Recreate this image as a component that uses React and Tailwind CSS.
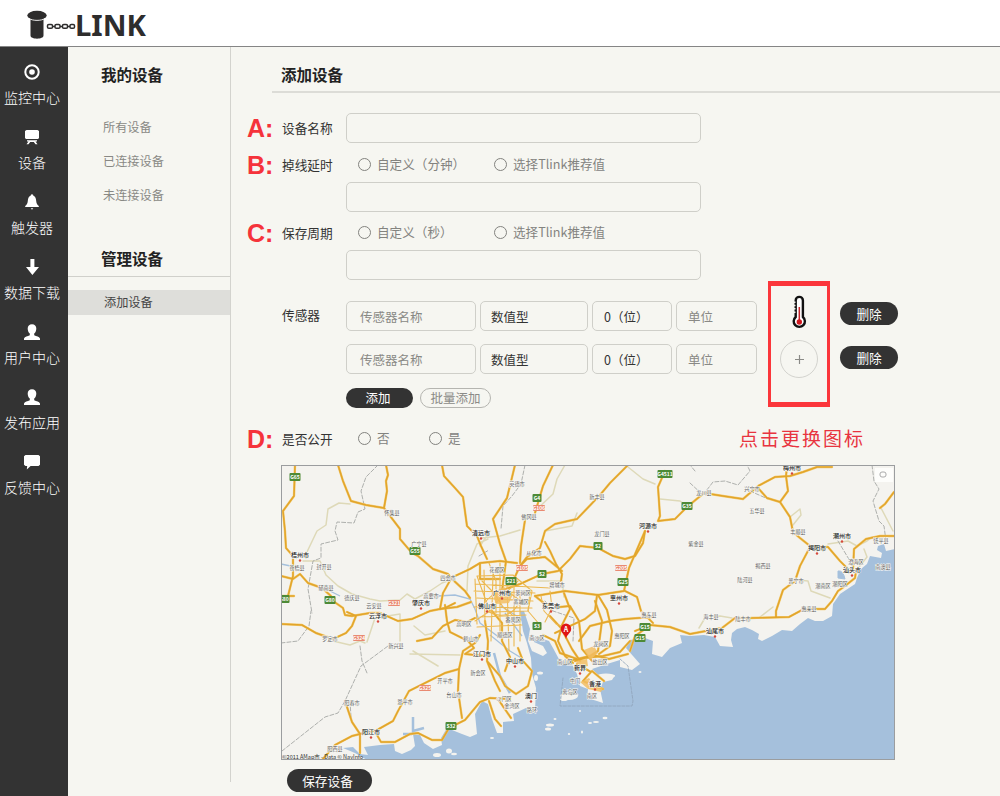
import React from "react";

const field = "rounded-[5px] border border-[#cfcfc9] bg-[#f6f6f1]";

function Glyph({ name }) {
  const shapes = {
    target: (
      <>
        <circle cx="8" cy="8" r="6.7" fill="none" stroke="#fff" strokeWidth="2" />
        <circle cx="8" cy="8" r="2.8" />
      </>
    ),
    device: <path d="M2.500 1h11l1.500 1v7l-1 1H2L1 9V2zM3 11.300h10v1.200h-1.500l2 2.800h-2l-1.700-2.300H6.200l-1.700 2.300h-2l2-2.800H3z" />,
    bell: <path d="M8 .3c1 0 1.300.8 1.400 1.500C11.500 2.600 12 4.500 12.200 7c.2 2.300.8 3.700 2.600 5V13H1.200v-1C3 10.700 3.600 9.300 3.800 7 4 4.500 4.500 2.600 6.600 1.800 6.700 1.100 7 .3 8 .3zM6.700 14.200h2.600L8 15.800z" />,
    down: <path d="M6.400 0h4v8H15L8.400 16 2 8h4.400z" />,
    user: <path d="M8 .2c2.700 0 4.300 1.700 4.300 4.200 0 2-.8 4-2.100 5.200v1.600c2.300 1 5 1.500 5.800 3.200V16H0v-1.600c.8-1.700 3.500-2.200 5.800-3.200V9.600C4.500 8.400 3.700 6.400 3.700 4.400 3.700 1.900 5.300.2 8 .2z" />,
    chat: <path d="M1.500 1h13L16 2.200v8.600L14.500 12H6.600l-3.800 3.500L3.200 12H1.500L0 10.800V2.200z" />,
  };
  return (
    <svg viewBox="0 0 16 16" className="h-4 w-4 fill-white">
      {shapes[name]}
    </svg>
  );
}

const nav = [
  ["target", "监控中心"],
  ["device", "设备"],
  ["bell", "触发器"],
  ["down", "数据下载"],
  ["user", "用户中心"],
  ["user", "发布应用"],
  ["chat", "反馈中心"],
];

function Logo() {
  return (
    <svg viewBox="0 0 130 40" className="ml-6 mt-1 h-10 w-[130px]" fill="#2e2d2d">
      <path d="M6.500 14v17.500c0 4.200 13 4.200 13 0V14z" />
      <ellipse cx="13" cy="11.500" rx="9.700" ry="4.700" />
      <path d="M5 14.500c4 2.500 12 2.500 16 0" fill="none" stroke="#fff" strokeWidth=".9" />
      <g fill="none" stroke="#2e2d2d" strokeWidth="1.500">
        <rect x="23.500" y="20.500" width="5" height="3.800" rx="1.300" />
        <rect x="31" y="20.500" width="5" height="3.800" rx="1.300" />
        <rect x="38.500" y="20.500" width="5" height="3.800" rx="1.300" />
        <rect x="46" y="20.500" width="4.500" height="3.800" rx="1.300" />
        <path d="M28 22.400h3M36 22.400h3M43 22.400h3" />
      </g>
      <text x="51" y="32.300" fontSize="29" fontWeight="700" fontFamily="'Noto Sans', sans-serif" textLength="71" lengthAdjust="spacingAndGlyphs">LINK</text>
    </svg>
  );
}

/* Map geometry is in canvas coordinates; the origin of the view is 281,464. */
const coast =
  "M895 548L886 550 884 543 878 545 877 549 882 552 881 557 870 555 867 563 861 568 857 577 855 583 840 593 833 603 832 615 823 620 815 620 808 617 800 623 792 630 782 629 772 635 762 640 758 638 759 633 752 629 745 626 737 628 732 632 731 639 733 646 720 645 715 636 704 634 690 635 680 634 682 642 670 647 662 656 652 653 653 640 645 637 630 639 626 647 640 663 632 669 620 666 620 659 607 663 592 668 598 674 615 674 612 679 603 681 600 688 603 702 597 700 587 697 588 688 580 685 577 673 572 663 560 660 553 647 549 640 543 638 533 636 534 641 543 645 547 652 543 655 532 650 528 640 530 628 524 610 520 610 523 630 527 642 531 657 532 673 536 687 535 710 526 707 513 713 514 720 503 721 503 732 497 732 492 718 488 703 482 700 475 713 477 733 470 736 462 733 447 727 441 737 442 744 433 748 424 742 420 734 413 733 415 745 411 749 402 753 395 750 394 743 380 744 364 746 368 754 360 753 353 746 343 747 355 752 367 759 895 759Z";

const majorRoads = [
  "M295 464L294 495 283 510 285 530 286 547 293 555 293 575 288 595 283 597M281 575L293 578 300 573 308 582 322 587 331 595 333 600 343 607 345 614 352 615 370 612 380 612 398 620 412 618 430 610 445 607 455 602",
  "M338 464L343 480 351 500 366 504 384 507 387 490 386 480 388 474 386 464M384 507L400 528 400 538 412 552 418 555 433 568 448 573 452 578 465 590 470 597",
  "M442 464L444 475 455 487 463 496 467 525 477 535 481 545 487 558",
  "M515 464L507 497 493 518 500 543 506 560 502 590M553 464L543 485 535 512",
  "M628 464L610 482 600 494 577 518 555 523 545 530 540 547 527 556 520 565 513 580",
  "M525 519L521 545 520 562M545 541L550 550 556 563 562 573 561 580M520 565L527 558 545 556 562 570M500 590L520 583 542 573 558 570 570 558 580 545 598 547 613 555 625 558 635 555 643 542 645 530",
  "M665 470L658 486 660 515 658 520 675 518 687 506 704 492 723 495 743 498 758 485 775 476 790 475 803 471 817 466 832 466M645 530L629 567 624 590 598 594 565 590 535 595",
  "M787 466L786 475 788 490 780 501 767 497 758 487M780 501L790 516 793 531 800 537 810 545 828 546 840 560 850 570",
  "M810 546L800 565 795 580 783 589 776 610 776 616M853 570L854 548 866 538 880 535 894 535M894 491L885 503 880 507M856 570L855 577 845 585 838 590 832 600 825 608 812 608 802 609 789 616 750 617 735 617 722 627 690 633 670 626 650 624 635 630",
  "M281 623L302 624 316 632 333 638 346 632 352 625 356 615 347 611M281 595L294 595",
  "M322 759L335 744 352 735 360 733 360 752M345 700L352 721 360 733 377 729 393 720 398 710 409 690 425 682 445 672 459 668 463 650 475 642 480 634M377 734L381 741 395 741 410 733 418 732 432 739 442 739 449 727 465 719 480 701 490 697 510 698",
  "M459 668L458 690 462 717M417 640L432 637 443 625 455 619 467 621 475 617M445 604L447 620 450 631 468 640 474 647 465 653 485 655",
  "M452 576L443 592 440 608 457 606 471 601M455 575L470 568 480 562 500 560 517 562M480 562L480 578 500 578",
  "M485 620L488 640 487 660 500 675 505 685 516 693 528 685 532 670 523 660 518 647M492 610L502 622 502 640 510 656 505 670M487 660L495 680 500 690",
  "M564 592L570 608 562 624 558 640 565 655 573 662M550 615L561 627 572 648 580 660M579 640L590 625 610 620 625 618 652 616M595 600L602 620 598 650 590 655 573 659M598 594L607 609 612 630 610 645 599 653M625 590L637 596 641 610 653 622",
  "M535 595L550 607 570 605 579 620 582 648 593 661M543 634L555 640 560 652 577 658M597 594L595 610 585 618 555 632M628 653L609 658 593 654M630 650L635 635 645 628",
  "M489 700L495 718 501 725M498 698L511 717M575 660L585 657 603 655 620 651 630 640M577 663L591 671 583 680 594 685 603 688M592 670L604 680",
];

const urbanRoads = [
  "M475 583L550 587M474 590L535 592M477 597L533 600M474 606L532 607M480 616L526 614M477 626L522 624M475 578L477 623M484 569L485 622M493 573L491 640M500 562L500 635M507 582L509 650M514 583L514 645M520 590L520 640M489 562L496 580 496 612M530 590L528 610 540 624M482 580L495 593 503 606 519 620M475 620L490 610 500 597 518 580M541 595L544 610 556 623 570 628M550 590L552 607 545 621",
  "M483 604Q500 580 520 600Q510 621 489 611Z",
  "M477 575L513 574L532 590L528 610L490 611Z",
];

const minorRoads = [
  "M306 553L317 530 326 524 328 508 339 502 350 503M303 560L320 560 326 574 338 585 352 593 370 598 380 600 400 599 407 593 415 598 430 590 442 582 453 578M467 590L468 565 477 543 488 538M481 537L500 535 520 529M480 545L490 530M367 641L375 617 400 613 400 640M413 650L438 665M410 653L460 654M333 640L350 644 360 640 365 642M414 625L425 634 445 630",
  "M565 464L557 478 553 493 535 510M545 530L572 525 577 512M628 466L643 478 655 483M660 498L680 500 687 505M790 516L800 508 801 514 793 524M790 578L808 580 811 590 830 597M828 543L848 540 857 545 867 540 872 536M864 548L867 556 855 571M699 627L705 617 720 615 732 617M760 616L773 606M881 507L893 530M537 580L562 580 564 596",
];

const borders = [
  "M378 464L366 476 361 490 365 508 358 511 354 522 337 521 335 530 338 539 321 543 321 557 313 560 308 588 312 612",
  "M281 642L298 640 309 625 311 610",
  "M282 750L325 716 338 712 345 700 361 665 388 645M360 645L362 660 367 672M350 700L351 716",
  "M525 464L521 483 512 495 503 505 501 528M690 482L703 494 713 481 725 480 738 484 750 470 747 464M750 490L768 498M872 464L874 480 879 488 873 500 879 520 884 525 886 540M695 470L690 464M892 475L883 469M838 540L850 560 853 570M545 600L553 610 574 617 573 640M479 555L489 549",
];

const shields = [
  [295, 476, "G65"], [415, 550, "G55"], [330, 599, "G80"], [284, 598, "G80"], [537, 497, "G4"],
  [542, 573, "S2"], [511, 580, "S21"], [598, 545, "S2"], [665, 473, "G4511"], [687, 505, "G35"],
  [623, 581, "G25"], [645, 626, "G15"], [640, 637, "G15"], [537, 625, "S3"], [451, 725, "S32"],
];
const routes = [
  [394, 602, "G321"], [359, 637, "G324"], [425, 687, "G325"], [539, 507, "G106"], [522, 567, "G105"], [621, 567, "G205"],
];

const cities = [
  [300, 555, "梧州市"], [481, 533, "清远市"], [421, 603, "肇庆市"], [502, 593, "广州市"], [487, 606, "佛山市"],
  [551, 606, "东莞市"], [648, 526, "河源市"], [619, 598, "惠州市"], [792, 468, "梅州市"], [842, 536, "潮州市"],
  [817, 548, "揭阳市"], [852, 570, "汕头市"], [715, 631, "汕尾市"], [378, 616, "云浮市"], [371, 732, "阳江市"],
  [482, 654, "江门市"], [515, 661, "中山市"], [531, 696, "澳门"], [580, 668, "新界"], [595, 684, "香港"],
];
const towns = [
  [297, 568, "苍梧县"], [324, 567, "封开县"], [326, 588, "郁南县"], [352, 598, "德庆县"], [374, 606, "云安县"],
  [392, 513, "怀集县"], [419, 544, "广宁县"], [448, 578, "四会市"], [431, 596, "高要市"], [517, 484, "英德市"],
  [529, 517, "佛冈县"], [597, 497, "新丰县"], [602, 534, "龙门县"], [534, 553, "从化市"], [497, 570, "花都区"],
  [557, 585, "增城市"], [523, 593, "萝岗区"], [521, 602, "黄埔区"], [704, 493, "龙川县"], [752, 489, "兴宁市"],
  [757, 511, "五华县"], [798, 532, "丰顺县"], [696, 544, "紫金县"], [763, 566, "揭西县"], [745, 580, "陆河县"],
  [796, 581, "普宁市"], [823, 586, "潮南区"], [840, 584, "潮阳区"], [856, 562, "澄海区"], [881, 541, "饶平县"],
  [883, 567, "南澳县"], [809, 609, "惠来县"], [711, 617, "海丰县"], [743, 619, "陆丰市"], [649, 615, "惠东县"],
  [622, 636, "惠阳区"], [330, 639, "罗定市"], [396, 646, "新兴县"], [352, 703, "阳春市"], [335, 749, "阳西县"],
  [405, 702, "恩平市"], [445, 681, "开平市"], [454, 695, "台山市"], [471, 639, "鹤山市"], [478, 673, "新会区"],
  [513, 620, "番禺区"], [505, 635, "顺德区"], [537, 638, "南沙区"], [601, 644, "龙岗区"], [565, 662, "南山区"],
  [600, 662, "盐田区"], [512, 706, "金湾区"], [532, 710, "路环"], [570, 692, "离岛区"], [592, 696, "南区"],
  [504, 699, "斗门区"], [464, 624, "高明区"], [575, 681, "屯门"],
];

const islands = [
  [540, 672, 3, 1.5], [536, 677, 2, 3], [569, 695, 9, 4], [564, 698, 4, 2], [550, 724, 4, 1.5], [548, 728, 3, 1.5],
  [555, 718, 1.5, 1], [590, 722, 2, 1], [596, 721, 3, 1], [605, 717, 2.500, 1.2], [582, 731, 1, 1.5], [492, 737, 2, 1],
  [437, 754, 4, 2], [449, 750, 3, 2.500], [454, 753, 3, 1.2], [640, 671, 1.5, 1], [569, 733, 1.2, 1], [580, 710, 1, 1], [606, 675, 9, 2.500],
];

function MapView() {
  return (
    <svg viewBox="281 464 614 295" className="h-[295px] w-[614px] shrink-0" fontFamily="'Noto Sans CJK SC', sans-serif">
      <rect x="281" y="464" width="614" height="295" fill="#f4f3ef" />
      <path d={coast} fill="#a5c0dc" />
      <g fill="#f4f3ef">
        {islands.map(([x, y, rx, ry], i) => <ellipse key={i} cx={x} cy={y} rx={rx} ry={ry} />)}
      </g>
      <g fill="none" stroke="#a5c0dc" strokeWidth="2.500">
        <path d="M413 734L413 716M413 730L424 727M412 733L403 733" />
        <path d="M494 652L500 675 510 692" />
        <path strokeWidth="1.300" d="M326 588L340 595M438 595L455 594 470 598 475 608 480 622 500 637M281 563L300 567M501 605L515 614 526 622M490 634L510 650 523 658M505 612L522 635" />
        <path d="M838 570Q843 569 845 578L838 577Z" fill="#a5c0dc" strokeWidth="1" />
      </g>
      <g fill="none" strokeLinejoin="round" strokeLinecap="round">
        <g stroke="#ded9b8" strokeWidth="1.500">{minorRoads.map((d) => <path key={d} d={d} />)}</g>
        <g stroke="#aeb0ad" strokeWidth="1" strokeDasharray="4 2">{borders.map((d) => <path key={d} d={d} />)}</g>
        <path d="M563 677L560 705 632 705 633 700 628 665 620 658" stroke="#8fa3ba" strokeWidth=".8" strokeDasharray="3 1.500" />
        <g stroke="#f3cb72" strokeWidth="2.400">{majorRoads.map((d) => <path key={d} d={d} />)}</g>
        <g stroke="#e2a52b" strokeWidth="1.500">{majorRoads.map((d) => <path key={d} d={d} />)}</g>
        <g stroke="#ecb850" strokeWidth="1.100">{urbanRoads.map((d) => <path key={d} d={d} />)}</g>
      </g>
      <path d="M492 592l12-6 9 7-4 9-13 1zM584 649l10-4 4 7-8 7zM576 660l11-2 1 7-10 2zM580 681l9-4 4 6 10 4-2 4-13-3z" fill="#f2bd62" opacity=".85" />
      <g textAnchor="middle" fontWeight="700" fontSize="5" fill="#fff">
        {shields.map(([x, y, t], i) => (
          <g key={i}>
            <rect x={x - (t.length > 3 ? 7.500 : t.length > 2 ? 5.500 : 4.500)} y={y - 4} width={t.length > 3 ? 15 : t.length > 2 ? 11 : 9} height="8" rx="1" fill="#4d8a36" />
            <text x={x} y={y + 2}>{t}</text>
          </g>
        ))}
        {routes.map(([x, y, t]) => (
          <g key={t}>
            <rect x={x - 6} y={y - 3} width="12" height="6" rx="1" fill="#e98a72" />
            <text x={x} y={y + 1.900}>{t}</text>
          </g>
        ))}
      </g>
      <g textAnchor="middle" fontSize="5.200" fill="#5f5f5f" stroke="#f8f8f5" strokeWidth="1" paintOrder="stroke">
        {towns.map(([x, y, t]) => <text key={t} x={x} y={y + 1}>{t}</text>)}
      </g>
      <g textAnchor="middle" fontSize="6" fontWeight="500" fill="#222" stroke="#fafaf7" strokeWidth="1.200" paintOrder="stroke">
        {cities.map(([x, y, t]) => <text key={t} x={x} y={y + 1}>{t}</text>)}
      </g>
      <g fill="#d5483c">
        {cities.map(([x, y, t]) => <circle key={t} cx={x} cy={y + 4.500} r="1.200" />)}
      </g>
      <path d="M566 638C565 633 560.800 632 560.800 627.800a5.200 5.200 0 0 1 10.400 0C571.200 632 567 633 566 638z" fill="#e01515" />
      <text x="566" y="630.700" fontSize="7" fontWeight="700" fill="#fff" textAnchor="middle">A</text>
      <rect x="875" y="467" width="18" height="14" fill="#fdfdfb" />
      <rect x="880" y="471" width="6" height="5" rx="2" fill="none" stroke="#aaa" />
      <text x="282" y="758.300" fontSize="5.500" fill="#333">©2011 AMap市 - Data © NavInfo</text>
      <rect x="281.500" y="464.500" width="613" height="294" fill="none" stroke="#9b9d9f" />
    </svg>
  );
}

function Letter({ children }) {
  return (
    <span className="w-[35px] shrink-0 font-['Liberation_Sans',sans-serif] text-[25px] font-bold leading-[30px] text-[#f5333b]">
      {children}
    </span>
  );
}

function Label({ children }) {
  return <span className="w-16 shrink-0 text-[12.700px] text-[#333] whitespace-nowrap">{children}</span>;
}

function Radio({ children, className }) {
  return (
    <span className={`flex shrink-0 items-center whitespace-nowrap text-[12.600px] text-[#83837f] ${className}`}>
      <i className="mr-[6px] block h-[13px] w-[13px] rounded-full border border-[#83837f]" />
      {children}
    </span>
  );
}

function SensorRow() {
  return (
    <div className="flex h-[30px] gap-1 text-[12.500px] leading-[29px]">
      <div className={`${field} w-[130px] pl-[13px] text-[#898985]`}>传感器名称</div>
      <div className={`${field} w-[108px] pl-[10px] text-[#333]`}>数值型</div>
      <div className={`${field} w-[80px] whitespace-nowrap pl-[11px] text-[#333]`}>0（位）</div>
      <div className={`${field} w-[81px] pl-[11px] text-[#898985]`}>单位</div>
    </div>
  );
}

function Thermometer() {
  return (
    <svg viewBox="0 0 16 36" className="h-9 w-4">
      <path d="M4.700 22V5.500a3.600 3.600 0 0 1 7.200 0V22a5.600 5.600 0 1 1-7.200 0z" fill="#fff" stroke="#111" strokeWidth="2.400" />
      <path d="M3 6.500v13" stroke="#f6f6f1" strokeWidth="3" strokeDasharray="1.500 1.800" />
      <path d="M8.300 12v14" stroke="#c9252b" strokeWidth="1.500" />
      <circle cx="8.300" cy="27" r="2.700" fill="#d0181f" />
    </svg>
  );
}

export default function App() {
  return (
    <div className="flex h-[796px] w-[1000px] flex-col overflow-hidden bg-[#f6f6f1] font-['Noto_Sans_CJK_SC',sans-serif]">
      <header className="h-[47px] shrink-0 border-b border-[#858585] bg-white">
        <Logo />
      </header>
      <div className="flex min-h-0 flex-1">
        <nav className="flex w-[68px] shrink-0 flex-col bg-[#333] pt-[17px]">
          {nav.map(([icon, text]) => (
            <div key={text} className="flex h-[65px] w-16 shrink-0 flex-col items-center">
              <Glyph name={icon} />
              <span className="mt-[7px] whitespace-nowrap text-[14px] font-light leading-5 text-white">{text}</span>
            </div>
          ))}
        </nav>

        <aside className="flex h-[735px] w-[163px] shrink-0 flex-col border-r border-[#d3d3ce]">
          <h2 className="ml-[33px] mt-[15px] text-[15.500px] font-bold leading-6 text-[#222]">我的设备</h2>
          <ul className="ml-[35px] mt-[24px] text-[12.200px] leading-[34px] text-[#898985]">
            <li>所有设备</li>
            <li>已连接设备</li>
            <li>未连接设备</li>
          </ul>
          <h2 className="mt-[34px] h-[31px] border-b border-[#d0d0cb] pl-[33px] text-[15.500px] font-bold leading-6 text-[#222]">管理设备</h2>
          <div className="mt-[13px] h-[25px] bg-[#dededa] pl-9 text-[12.200px] leading-[25px] text-[#444]">添加设备</div>
        </aside>

        <main className="flex min-w-0 flex-1 flex-col">
          <h1 className="ml-[41px] mt-[15px] h-[31px] shrink-0 border-b-2 border-[#dcdcd7] pl-[9px] text-[15.500px] font-bold leading-6 text-[#222]">添加设备</h1>

          <div className="ml-4 mt-5 flex h-[30px] shrink-0 items-center">
            <Letter>A:</Letter>
            <Label>设备名称</Label>
            <div className={`${field} h-[30px] w-[355px]`} />
          </div>

          <div className="ml-4 mt-[6px] flex h-[31px] shrink-0 items-center">
            <Letter>B:</Letter>
            <Label>掉线延时</Label>
            <Radio className="ml-3 w-[136px]">自定义（分钟）</Radio>
            <Radio>选择Tlink推荐值</Radio>
          </div>
          <div className={`${field} ml-[115px] mt-[2px] h-[30px] w-[355px] shrink-0`} />

          <div className="ml-4 mt-[5px] flex h-[31px] shrink-0 items-center">
            <Letter>C:</Letter>
            <Label>保存周期</Label>
            <Radio className="ml-3 w-[136px]">自定义（秒）</Radio>
            <Radio>选择Tlink推荐值</Radio>
          </div>
          <div className={`${field} ml-[115px] mt-[2px] h-[30px] w-[355px] shrink-0`} />

          <div className="ml-[51px] mt-[1px] flex h-[131px] shrink-0 items-start">
            <div className="pt-[20px]"><Label>传感器</Label></div>
            <div className="ml-[26px] mt-5 flex w-[411px] shrink-0 flex-col">
              <SensorRow />
              <div className="mt-[13px]"><SensorRow /></div>
              <div className="mt-[14px] flex gap-[7px] text-[12.500px] leading-5">
                <button className="h-5 w-[67px] rounded-full bg-[#333] pr-[3px] text-white">添加</button>
                <button className="h-5 w-[71px] rounded-full border border-[#b5b5b0] text-center leading-[18px] text-[#8b8b87]">批量添加</button>
              </div>
            </div>
            <div className="ml-[11px] flex h-[126px] w-[62px] shrink-0 flex-col items-center border-x-[3px] border-y-[5px] border-[#fb363b]">
              <div className="mt-[9px]"><Thermometer /></div>
              <div className="mt-[9px] flex h-[38px] w-[38px] items-center justify-center rounded-full border border-[#d3d3ce]">
                <svg viewBox="0 0 10 10" className="h-[9px] w-[9px]"><path d="M5 0v10M0 5h10" stroke="#8b8b87" strokeWidth="1.300" /></svg>
              </div>
            </div>
            <div className="ml-[10px] mt-[21px] flex flex-col gap-[21px] text-[12.700px] leading-[22px] text-white">
              <button className="h-[23px] w-[58px] rounded-full bg-[#333]">删除</button>
              <button className="h-[23px] w-[58px] rounded-full bg-[#333]">删除</button>
            </div>
          </div>

          <div className="ml-4 mt-[11px] flex h-[31px] shrink-0 items-center">
            <Letter>D:</Letter>
            <Label>是否公开</Label>
            <Radio className="ml-3 w-[71px]">否</Radio>
            <Radio className="w-[310px]">是</Radio>
            <span className="whitespace-nowrap text-[19px] tracking-[2px] text-[#e8343f]">点击更换图标</span>
          </div>

          <div className="ml-[50px] mt-[11px] shrink-0"><MapView /></div>
          <button className="ml-14 mt-[9px] h-[23px] w-[85px] shrink-0 rounded-full bg-[#333] pr-1 text-[12.700px] leading-[22px] text-white">保存设备</button>
        </main>
      </div>
    </div>
  );
}
